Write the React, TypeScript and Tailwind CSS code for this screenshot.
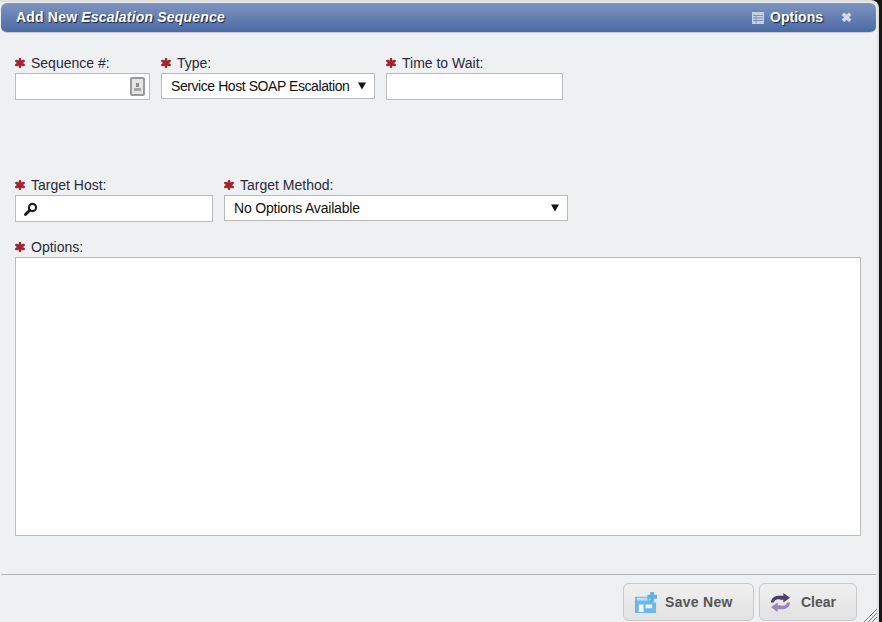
function Star() {
  return (
    <svg viewBox="0 0 10 10" className="w-[10px] h-[10px] shrink-0 mr-[6px]">
      <g stroke="#9c2530" strokeWidth="2.6" strokeLinecap="round">
        <path d="M5 1.2v7.6M1.4 3l7.2 4M8.6 3l-7.2 4" />
      </g>
    </svg>
  );
}

function Label({ text }: { text: string }) {
  return (
    <div className="flex items-center h-[17px] text-[14px] leading-[17px] text-[#2a2a3a] pt-[1px]">
      <Star />
      <span>{text}</span>
    </div>
  );
}

function Caret() {
  return (
    <svg viewBox="0 0 8 8" className="w-[8px] h-[8px] shrink-0">
      <path d="M0 0.5h8L4 7.5z" fill="#111" />
    </svg>
  );
}

function SaveIcon() {
  return (
    <svg viewBox="0 0 24 24" className="w-[23px] h-[23px] shrink-0">
      <path d="M1 6h15v4h4v2h3v11H1z" fill="#6bb8e8" />
      <rect x="3" y="7" width="11" height="3" fill="#b4dff7" />
      <path d="M5 14h5v8H5zM12 14h7v4h-7z" fill="#eef8fd" />
      <path d="M17 1h4v3h3v4h-3v3h-4V8h-3V4h3z" fill="#5db2e3" />
    </svg>
  );
}

function RefreshIcon() {
  return (
    <svg viewBox="0 0 22 22" className="w-[21px] h-[21px] shrink-0">
      <path d="M1 11C1 6 6 3 11 4h3V1l7 5-7 5V8h-3c-3-1-6 0-7 3z" fill="#4a3f6b" />
      <path d="M21 11c0 5-5 8-10 7H8v3l-7-5 7-5v3h3c3 1 6 0 7-3z" fill="#9a86b8" />
    </svg>
  );
}

export default function App() {
  return (
    <div className="w-[882px] h-[622px] bg-[#151515] flex font-['Liberation_Sans',Arial,sans-serif] overflow-hidden">
      <div className="w-[879px] h-full bg-[#eff0f2] rounded-tr-[8px] border-t-[2px] border-r-[2px] border-[#dfdfdf] flex flex-col relative">
        {/* Title bar */}
        <div className="shrink-0 mt-[1px] ml-[1px] w-[875px] h-[30px] rounded-[6px] border-b border-[#c9ccd2] bg-gradient-to-b from-[#7f95c0] to-[#4a6aa5] flex items-center pl-[15px] pr-[24px] text-white font-bold text-[14px] whitespace-nowrap">
          <span className="tracking-[0.19px] [text-shadow:1px_1px_1px_#16233f]">
            Add New <i>Escalation Sequence</i>
          </span>
          <div className="ml-auto flex items-center">
            <svg viewBox="0 0 12 12" className="w-[12px] h-[12px] mr-[6px]">
              <rect x="0" y="0" width="12" height="12" fill="#c5cfe2" />
              <path d="M1 3.5h10M1 6h10M1 8.5h10M4 3.5v8" stroke="#7f93bb" strokeWidth="1" />
            </svg>
            <span className="[text-shadow:1px_1px_1px_#16233f]">Options</span>
            <span className="ml-[18px] text-[#d5dbe8] text-[13px] leading-none">✖</span>
          </div>
        </div>

        {/* First row */}
        <div className="shrink-0 flex gap-[11px] pl-[15px] mt-[21px]">
          <div className="w-[135px]">
            <Label text="Sequence #:" />
            <div className="mt-[2px] h-[27px] bg-white border border-[#bbbbbb] flex items-center justify-end pr-[4px]">
              <div className="w-[15px] h-[19px] rounded-[2px] border-2 border-[#9a9a9a] bg-[#e4e4e4] flex flex-col items-center justify-center gap-[1px]">
                <div className="w-[3px] h-[4px] bg-[#8c8c8c]" />
                <div className="w-[7px] h-[3px] bg-[#a8a8a8]" />
              </div>
            </div>
          </div>
          <div className="w-[214px]">
            <Label text="Type:" />
            <div className="mt-[2px] h-[26px] bg-white border border-[#bbbbbb] flex items-center justify-between pl-[9px] pr-[8px] text-[14px] text-[#111] whitespace-nowrap">
              <span className="tracking-[-0.43px]">Service Host SOAP Escalation</span>
              <Caret />
            </div>
          </div>
          <div className="w-[177px]">
            <Label text="Time to Wait:" />
            <div className="mt-[2px] h-[27px] bg-white border border-[#bbbbbb]" />
          </div>
        </div>

        {/* Second row */}
        <div className="shrink-0 flex gap-[11px] pl-[15px] mt-[76px]">
          <div className="w-[198px]">
            <Label text="Target Host:" />
            <div className="mt-[2px] h-[27px] bg-white border border-[#bbbbbb] flex items-center pl-[8px]">
              <svg viewBox="0 0 14 14" className="w-[14px] h-[14px]" fill="none">
                <circle cx="8.5" cy="5.5" r="3.6" stroke="#222" strokeWidth="2.2" />
                <path d="M5.5 8.5L1.5 12.5" stroke="#111" strokeWidth="2.8" strokeLinecap="round" />
              </svg>
            </div>
          </div>
          <div className="w-[344px]">
            <Label text="Target Method:" />
            <div className="mt-[2px] h-[26px] bg-white border border-[#bbbbbb] flex items-center justify-between pl-[9px] pr-[8px] text-[14px] text-[#111] whitespace-nowrap">
              <span className="tracking-[-0.2px]">No Options Available</span>
              <Caret />
            </div>
          </div>
        </div>

        {/* Options */}
        <div className="shrink-0 pl-[15px] mt-[16px] w-[861px]">
          <Label text="Options:" />
          <div className="mt-[2px] h-[279px] bg-white border border-[#bbbbbb]" />
        </div>

        {/* Footer */}
        <div className="shrink-0 mt-[38px] border-t border-[#b4b4b4] flex justify-end gap-[5px] pt-[8px] pr-[19px] ml-[1px] mr-[1px]">
          <button className="w-[131px] h-[38px] rounded-[6px] border border-[#c8c8c8] bg-gradient-to-b from-[#f0f0f0] to-[#e2e2e2] flex items-center pl-[10px] text-[14px] font-bold text-[#555]">
            <SaveIcon />
            <span className="ml-[8px] tracking-[0.3px]">Save New</span>
          </button>
          <button className="w-[98px] h-[38px] rounded-[6px] border border-[#c8c8c8] bg-gradient-to-b from-[#f0f0f0] to-[#e2e2e2] flex items-center pl-[10px] text-[14px] font-bold text-[#555]">
            <RefreshIcon />
            <span className="ml-[10px]">Clear</span>
          </button>
        </div>

        {/* Resize grip */}
        <svg viewBox="0 0 14 14" className="absolute right-0 bottom-0 w-[14px] h-[14px]">
          <path d="M14 1L1 14M14 5L5 14M14 9L9 14" stroke="#777" strokeWidth="1" />
        </svg>
      </div>
    </div>
  );
}
